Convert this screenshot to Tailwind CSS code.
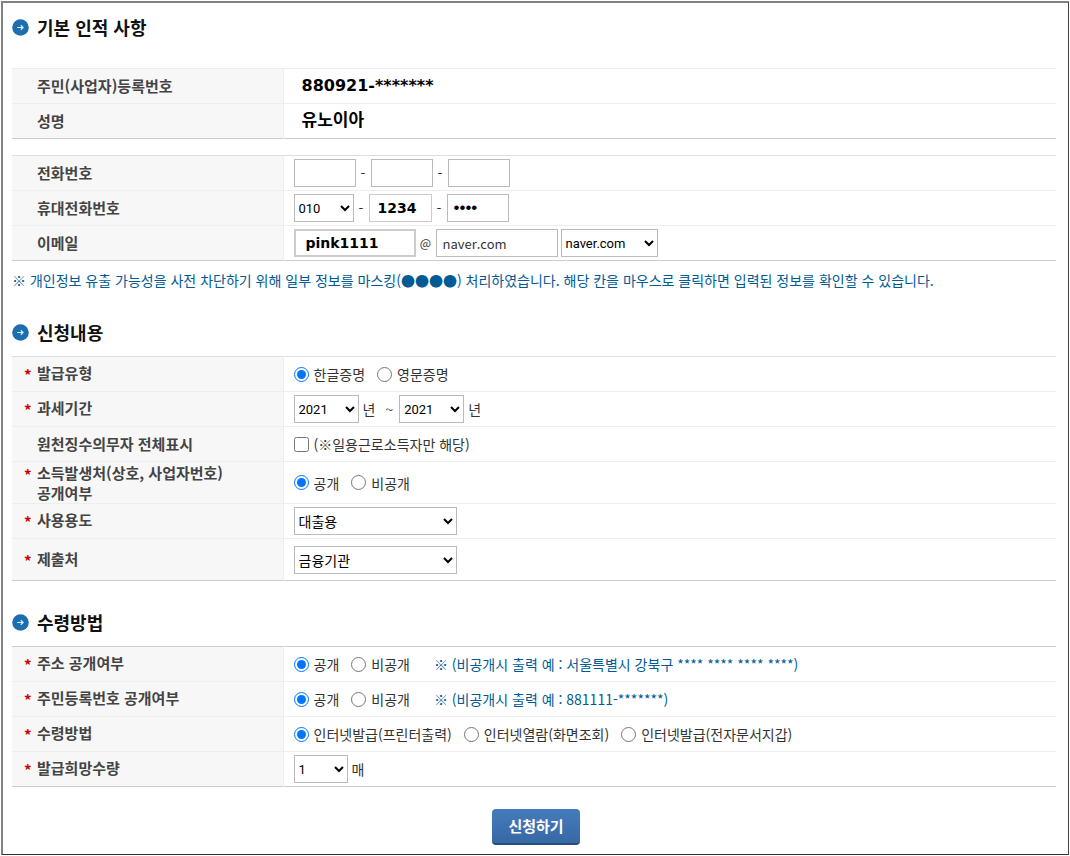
<!DOCTYPE html>
<html lang="ko">
<head>
    <meta charset="UTF-8">
    <meta name="viewport" content="width=device-width, initial-scale=1.0">
    <title>증명 신청</title>
    <script src="https://cdn.jsdelivr.net/npm/@tailwindcss/browser@4"></script>
</head>
<body class="bg-white text-[#333] text-[14px] leading-5 font-['Noto_Sans_CJK_KR',sans-serif]">
    <form class="m-px border-t-2 border-l-2 border-r border-b border-t-[#7f8383] border-l-[#7f8383] border-r-[#444] border-b-[#333] pt-3 pl-[9px] pr-3 pb-[9px]">

        <!-- Basic info -->
        <h2 class="flex items-center gap-2 h-6 text-[18px] leading-6 font-bold text-[#111]">
            <svg class="w-[17px] h-[17px]" viewBox="0 0 17 17" fill="none"><circle cx="8.5" cy="8.5" r="8.3" fill="#1b6fae"/><path d="M5.2 8.5h6M8.8 6.3l2.3 2.2-2.3 2.2" stroke="#d9edfa" stroke-width="1.2"/></svg>
            기본 인적 사항
        </h2>
        <table class="w-full mt-[29px] table-fixed border-collapse border-t border-t-[#eee] border-b border-b-[#ccc]">
            <tbody>
                <tr class="h-[35px] border-b border-b-[#eee]">
                    <th scope="row" class="w-[271px] bg-[#f7f7f7] border-r border-r-[#eee] pl-[25px] text-left text-[15px] font-bold text-[#444]">주민(사업자)등록번호</th>
                    <td class="pl-[18px] text-black text-[16px] font-bold font-['DejaVu_Sans',sans-serif]">880921-*******</td>
                </tr>
                <tr class="h-[35px]">
                    <th scope="row" class="bg-[#f7f7f7] border-r border-r-[#eee] pl-[25px] text-left text-[15px] font-bold text-[#444]">성명</th>
                    <td class="pl-[18px] pb-1 text-black text-[17px] font-bold">유노이아</td>
                </tr>
            </tbody>
        </table>

        <table class="w-full mt-4 table-fixed border-collapse border-t border-t-[#ddd] border-b border-b-[#ccc]">
            <tbody>
                <tr class="h-[35px] border-b border-b-[#eee]">
                    <th scope="row" class="w-[271px] bg-[#f7f7f7] border-r border-r-[#eee] pl-[25px] text-left text-[15px] font-bold text-[#444]">전화번호</th>
                    <td class="pl-2.5">
                        <div class="flex items-center">
                            <input type="text" aria-label="전화번호 앞자리" class="w-[62px] h-7 border border-[#bbb] px-1.5">
                            <span class="w-[15px] text-center">-</span>
                            <input type="text" aria-label="전화번호 가운데자리" class="w-[62px] h-7 border border-[#bbb] px-1.5">
                            <span class="w-[15px] text-center">-</span>
                            <input type="text" aria-label="전화번호 끝자리" class="w-[62px] h-7 border border-[#bbb] px-1.5">
                        </div>
                    </td>
                </tr>
                <tr class="h-[35px] border-b border-b-[#eee]">
                    <th scope="row" class="bg-[#f7f7f7] border-r border-r-[#eee] pl-[25px] text-left text-[15px] font-bold text-[#444]">휴대전화번호</th>
                    <td class="pl-2.5">
                        <div class="flex items-center">
                            <select aria-label="휴대전화 앞자리" class="w-[60px] h-7 border border-[#bbb] text-[13px] text-black font-['Roboto','Noto_Sans_CJK_KR',sans-serif]"><option>010</option><option>011</option></select>
                            <span class="w-[15px] text-center">-</span>
                            <input type="text" value="1234" aria-label="휴대전화 가운데자리" class="w-[63px] h-7 border border-[#ccc] px-2 text-black text-[14px] font-bold font-['DejaVu_Sans',sans-serif]">
                            <span class="w-[15px] text-center">-</span>
                            <input type="password" value="1234" aria-label="휴대전화 끝자리" class="w-[62px] h-7 border border-[#bbb] px-1.5 text-black text-[17px] font-['Liberation_Sans',sans-serif]">
                        </div>
                    </td>
                </tr>
                <tr class="h-[35px]">
                    <th scope="row" class="bg-[#f7f7f7] border-r border-r-[#eee] pl-[25px] text-left text-[15px] font-bold text-[#444]">이메일</th>
                    <td class="pl-2.5">
                        <div class="flex items-center">
                            <input type="text" value="pink1111" aria-label="이메일 아이디" class="w-[122px] h-7 border-2 border-[#ccc] px-2.5 text-black text-[14px] font-bold font-['DejaVu_Sans',sans-serif]">
                            <span class="w-5 text-center text-[12px]">@</span>
                            <input type="text" value="naver.com" aria-label="이메일 도메인" class="w-[122px] h-7 border border-[#bbb] px-1.5 text-[13px] font-['Noto_Sans_CJK_KR',sans-serif]">
                            <select aria-label="이메일 도메인 선택" class="w-[97px] h-7 ml-[3px] border border-[#bbb] text-[13px] text-black font-['Roboto','Noto_Sans_CJK_KR',sans-serif]"><option>naver.com</option><option>직접입력</option></select>
                        </div>
                    </td>
                </tr>
            </tbody>
        </table>
        <p class="mt-[9px] text-[#005b94]">※ 개인정보 유출 가능성을 사전 차단하기 위해 일부 정보를 마스킹(●●●●) 처리하였습니다. 해당 칸을 마우스로 클릭하면 입력된 정보를 확인할 수 있습니다.</p>

        <!-- Application -->
        <h2 class="flex items-center gap-2 h-6 mt-[30px] text-[18px] leading-6 font-bold text-[#111]">
            <svg class="w-[17px] h-[17px]" viewBox="0 0 17 17" fill="none"><circle cx="8.5" cy="8.5" r="8.3" fill="#1b6fae"/><path d="M5.2 8.5h6M8.8 6.3l2.3 2.2-2.3 2.2" stroke="#d9edfa" stroke-width="1.2"/></svg>
            신청내용
        </h2>
        <table class="w-full mt-3 table-fixed border-collapse border-t border-t-[#ddd] border-b border-b-[#ccc]">
            <tbody>
                <tr class="h-[35px] border-b border-b-[#eee]">
                    <th scope="row" class="w-[271px] bg-[#f7f7f7] border-r border-r-[#eee] pl-3 text-left text-[15px] leading-5 font-bold text-[#444]">
                        <div class="flex"><span class="w-[13px] pt-0.5 text-[#d00000] font-bold">*</span>발급유형</div>
                    </th>
                    <td class="pl-2.5">
                        <div class="flex items-center">
                            <label class="flex items-center gap-[5px] mr-3"><input type="radio" name="certType" checked class="size-[15px]">한글증명</label>
                            <label class="flex items-center gap-[5px]"><input type="radio" name="certType" class="size-[15px]">영문증명</label>
                        </div>
                    </td>
                </tr>
                <tr class="h-[35px] border-b border-b-[#eee]">
                    <th scope="row" class="bg-[#f7f7f7] border-r border-r-[#eee] pl-3 text-left text-[15px] leading-5 font-bold text-[#444]">
                        <div class="flex"><span class="w-[13px] pt-0.5 text-[#d00000] font-bold">*</span>과세기간</div>
                    </th>
                    <td class="pl-2.5">
                        <div class="flex items-center">
                            <select aria-label="과세기간 시작" class="w-[65px] h-7 border border-[#bbb] text-[13px] text-black font-['Roboto','Noto_Sans_CJK_KR',sans-serif]"><option>2021</option><option>2020</option></select>
                            <span class="ml-1">년</span>
                            <span class="ml-2.5 mr-1.5">~</span>
                            <select aria-label="과세기간 종료" class="w-[65px] h-7 border border-[#bbb] text-[13px] text-black font-['Roboto','Noto_Sans_CJK_KR',sans-serif]"><option>2021</option><option>2020</option></select>
                            <span class="ml-1">년</span>
                        </div>
                    </td>
                </tr>
                <tr class="h-[35px] border-b border-b-[#eee]">
                    <th scope="row" class="bg-[#f7f7f7] border-r border-r-[#eee] pl-[25px] text-left text-[15px] leading-5 font-bold text-[#444]">원천징수의무자 전체표시</th>
                    <td class="pl-2.5">
                        <label class="flex items-center gap-[5px]"><input type="checkbox" class="size-[15px]">(※일용근로소득자만 해당)</label>
                    </td>
                </tr>
                <tr class="h-[42px] border-b border-b-[#eee]">
                    <th scope="row" class="bg-[#f7f7f7] border-r border-r-[#eee] pl-3 text-left text-[15px] leading-5 font-bold text-[#444]">
                        <div class="flex"><span class="w-[13px] pt-0.5 text-[#d00000] font-bold">*</span><span>소득발생처(상호, 사업자번호)<br>공개여부</span></div>
                    </th>
                    <td class="pl-2.5">
                        <div class="flex items-center">
                            <label class="flex items-center gap-[5px] mr-3"><input type="radio" name="incomeOpen" checked class="size-[15px]">공개</label>
                            <label class="flex items-center gap-[5px]"><input type="radio" name="incomeOpen" class="size-[15px]">비공개</label>
                        </div>
                    </td>
                </tr>
                <tr class="h-[35px] border-b border-b-[#eee]">
                    <th scope="row" class="bg-[#f7f7f7] border-r border-r-[#eee] pl-3 text-left text-[15px] leading-5 font-bold text-[#444]">
                        <div class="flex"><span class="w-[13px] pt-0.5 text-[#d00000] font-bold">*</span><label for="purpose">사용용도</label></div>
                    </th>
                    <td class="pl-2.5">
                        <select id="purpose" class="block w-[163px] h-7 border border-[#bbb] text-[14px] text-black font-['Noto_Sans_CJK_KR',sans-serif]"><option>대출용</option></select>
                    </td>
                </tr>
                <tr class="h-[42px]">
                    <th scope="row" class="bg-[#f7f7f7] border-r border-r-[#eee] pl-3 text-left text-[15px] leading-5 font-bold text-[#444]">
                        <div class="flex"><span class="w-[13px] pt-0.5 text-[#d00000] font-bold">*</span><label for="submitTo">제출처</label></div>
                    </th>
                    <td class="pl-2.5">
                        <select id="submitTo" class="block w-[163px] h-7 border border-[#bbb] text-[14px] text-black font-['Noto_Sans_CJK_KR',sans-serif]"><option>금융기관</option></select>
                    </td>
                </tr>
            </tbody>
        </table>

        <!-- Delivery -->
        <h2 class="flex items-center gap-2 h-6 mt-[29px] text-[18px] leading-6 font-bold text-[#111]">
            <svg class="w-[17px] h-[17px]" viewBox="0 0 17 17" fill="none"><circle cx="8.5" cy="8.5" r="8.3" fill="#1b6fae"/><path d="M5.2 8.5h6M8.8 6.3l2.3 2.2-2.3 2.2" stroke="#d9edfa" stroke-width="1.2"/></svg>
            수령방법
        </h2>
        <table class="w-full mt-3 table-fixed border-collapse border-t border-t-[#ccc] border-b border-b-[#ccc]">
            <tbody>
                <tr class="h-[35px] border-b border-b-[#eee]">
                    <th scope="row" class="w-[271px] bg-[#f7f7f7] border-r border-r-[#eee] pl-3 text-left text-[15px] leading-5 font-bold text-[#444]">
                        <div class="flex"><span class="w-[13px] pt-0.5 text-[#d00000] font-bold">*</span>주소 공개여부</div>
                    </th>
                    <td class="pl-2.5">
                        <div class="flex items-center">
                            <label class="flex items-center gap-[5px] mr-3"><input type="radio" name="addrOpen" checked class="size-[15px]">공개</label>
                            <label class="flex items-center gap-[5px]"><input type="radio" name="addrOpen" class="size-[15px]">비공개</label>
                            <span class="ml-6 text-[#005b94]">※ (비공개시 출력 예 : 서울특별시 강북구 **** **** **** ****)</span>
                        </div>
                    </td>
                </tr>
                <tr class="h-[35px] border-b border-b-[#eee]">
                    <th scope="row" class="bg-[#f7f7f7] border-r border-r-[#eee] pl-3 text-left text-[15px] leading-5 font-bold text-[#444]">
                        <div class="flex"><span class="w-[13px] pt-0.5 text-[#d00000] font-bold">*</span>주민등록번호 공개여부</div>
                    </th>
                    <td class="pl-2.5">
                        <div class="flex items-center">
                            <label class="flex items-center gap-[5px] mr-3"><input type="radio" name="idOpen" checked class="size-[15px]">공개</label>
                            <label class="flex items-center gap-[5px]"><input type="radio" name="idOpen" class="size-[15px]">비공개</label>
                            <span class="ml-6 text-[#005b94]">※ (비공개시 출력 예 : 881111-*******)</span>
                        </div>
                    </td>
                </tr>
                <tr class="h-[35px] border-b border-b-[#eee]">
                    <th scope="row" class="bg-[#f7f7f7] border-r border-r-[#eee] pl-3 text-left text-[15px] leading-5 font-bold text-[#444]">
                        <div class="flex"><span class="w-[13px] pt-0.5 text-[#d00000] font-bold">*</span>수령방법</div>
                    </th>
                    <td class="pl-2.5">
                        <div class="flex items-center">
                            <label class="flex items-center gap-[5px] mr-3"><input type="radio" name="receive" checked class="size-[15px]">인터넷발급(프린터출력)</label>
                            <label class="flex items-center gap-[5px] mr-3"><input type="radio" name="receive" class="size-[15px]">인터넷열람(화면조회)</label>
                            <label class="flex items-center gap-[5px]"><input type="radio" name="receive" class="size-[15px]">인터넷발급(전자문서지갑)</label>
                        </div>
                    </td>
                </tr>
                <tr class="h-[35px]">
                    <th scope="row" class="bg-[#f7f7f7] border-r border-r-[#eee] pl-3 text-left text-[15px] leading-5 font-bold text-[#444]">
                        <div class="flex"><span class="w-[13px] pt-0.5 text-[#d00000] font-bold">*</span><label for="copies">발급희망수량</label></div>
                    </th>
                    <td class="pl-2.5">
                        <div class="flex items-center gap-1">
                            <select id="copies" class="w-[54px] h-7 border border-[#bbb] text-[13px] text-black font-['Roboto','Noto_Sans_CJK_KR',sans-serif]"><option>1</option><option>2</option></select>
                            매
                        </div>
                    </td>
                </tr>
            </tbody>
        </table>

        <div class="flex justify-center mt-[22px] pl-1">
            <button type="submit" class="w-[88px] h-9 rounded border-b-2 border-[#284f80] bg-linear-to-b from-[#457bba] to-[#3868a6] text-white text-[15px] font-bold">신청하기</button>
        </div>
    </form>
</body>
</html>
